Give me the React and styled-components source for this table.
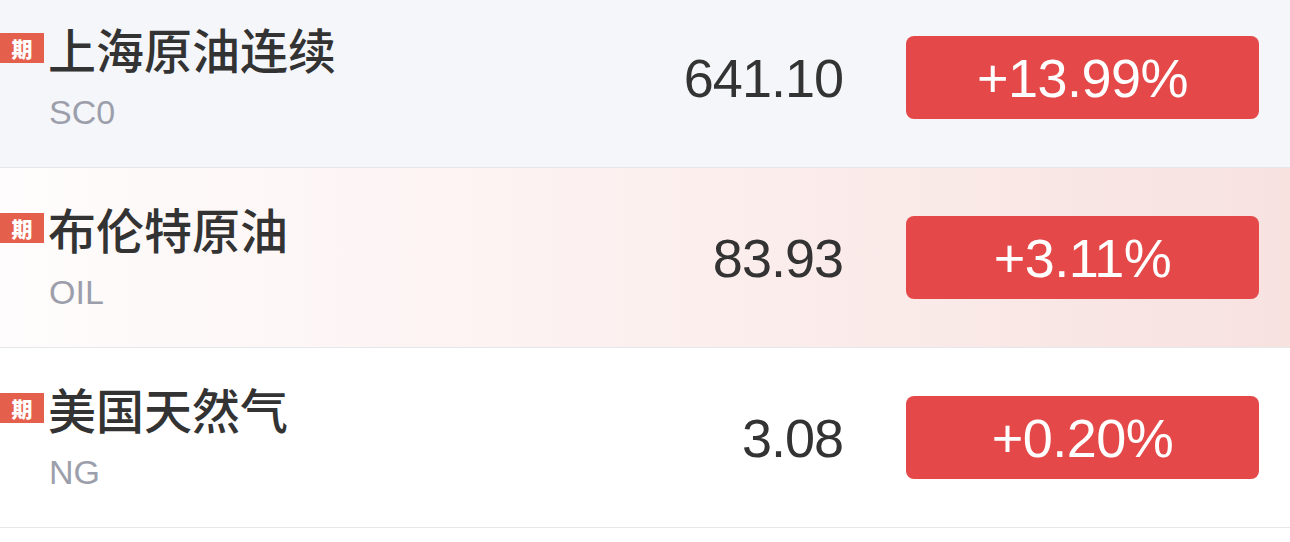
import React from "react";
import styled, { createGlobalStyle } from "styled-components";

const GlobalStyle = createGlobalStyle`
  html, body {
    margin: 0;
    padding: 0;
    background: #ffffff;
  }
  body {
    font-family: "Liberation Sans", "Noto Sans CJK SC", sans-serif;
    overflow: hidden;
  }
`;

const List = styled.div`
  width: 1290px;
  margin-top: -12px;
`;

const rowBackgrounds = {
  active: "#f5f6fa",
  hot: "linear-gradient(90deg, #fefcfc 0%, #fcf1f0 45%, #f7e2e0 100%)",
  plain: "#ffffff",
};

const Row = styled.div`
  display: flex;
  align-items: center;
  height: 179px;
  border-bottom: 1px solid #e6e7eb;
  background: ${(props) => rowBackgrounds[props.tone] || rowBackgrounds.plain};
`;

const NameCol = styled.div`
  flex: 1;
  display: flex;
  flex-direction: column;
  align-self: flex-start;
  padding-top: 30px;
  gap: 14px;
`;

const NameLine = styled.div`
  display: flex;
  align-items: center;
  gap: 4px;
  height: 60px;
`;

const Tag = styled.span`
  display: flex;
  align-items: center;
  justify-content: center;
  width: 44px;
  height: 30px;
  background: #e4604c;
  color: #ffffff;
  font-family: "Noto Sans CJK SC", sans-serif;
  font-size: 21px;
  font-weight: 900;
`;

const Name = styled.span`
  font-family: "Noto Sans CJK SC", sans-serif;
  font-size: 48px;
  font-weight: 500;
  line-height: 60px;
  color: #333333;
`;

const Code = styled.span`
  padding-left: 49px;
  font-size: 34px;
  line-height: 40px;
  color: #9c9fab;
`;

const Price = styled.div`
  font-size: 54px;
  color: #333333;
  text-align: right;
  letter-spacing: -1px;
`;

const Change = styled.div`
  display: flex;
  align-items: center;
  justify-content: center;
  width: 353px;
  height: 83px;
  margin: 0 31px 0 63px;
  border-radius: 8px;
  background: ${(props) => (props.up ? "#e54848" : "#1fa35b")};
  color: #ffffff;
  font-size: 54px;
  letter-spacing: -0.5px;
`;

const quotes = [
  { name: "上海原油连续", code: "SC0", price: "641.10", change: "+13.99%", tone: "active" },
  { name: "布伦特原油", code: "OIL", price: "83.93", change: "+3.11%", tone: "hot" },
  { name: "美国天然气", code: "NG", price: "3.08", change: "+0.20%", tone: "plain" },
];

const QuoteRow = ({ name, code, price, change, tone }) => (
  <Row tone={tone}>
    <NameCol>
      <NameLine>
        <Tag>期</Tag>
        <Name>{name}</Name>
      </NameLine>
      <Code>{code}</Code>
    </NameCol>
    <Price>{price}</Price>
    <Change up={change.startsWith("+")}>{change}</Change>
  </Row>
);

const App = () => (
  <>
    <GlobalStyle />
    <List>
      {quotes.map((q) => (
        <QuoteRow key={q.code} {...q} />
      ))}
    </List>
  </>
);

export default App;
